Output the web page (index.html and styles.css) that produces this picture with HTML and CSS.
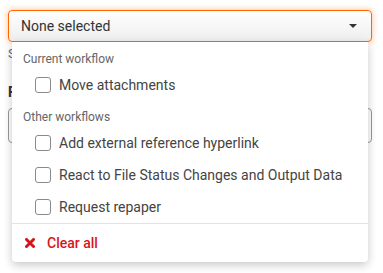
FILE: index.html
```html
<!DOCTYPE html>
<html lang="en">
<head>
    <meta charset="UTF-8">
    <meta name="viewport" content="width=device-width, initial-scale=1.0">
    <title>Workflow picker</title>
    <link rel="stylesheet" href="styles.css">
</head>
<body>
<div class="form">
    <div class="field-label top-label">Workflow (optional)</div>

    <div class="picker">
        <div class="select">
            <span class="select-value">None selected</span>
            <span class="caret"></span>
        </div>

        <div class="menu">
            <div class="menu-group">Current workflow</div>
            <label class="option"><span class="box"></span>Move attachments</label>

            <div class="menu-group">Other workflows</div>
            <label class="option"><span class="box"></span>Add external reference hyperlink</label>
            <label class="option"><span class="box"></span>React to File Status Changes and Output Data</label>
            <label class="option"><span class="box"></span>Request repaper</label>

            <div class="menu-footer">
                <span class="clear">
                    <svg class="clear-icon" width="10" height="10" viewBox="0 0 10 10">
                        <path d="M1.5 1.5 L8.5 8.5 M8.5 1.5 L1.5 8.5" stroke="#d7141a" stroke-width="2.9" stroke-linecap="square"/>
                    </svg>
                    Clear all
                </span>
            </div>
        </div>
    </div>

    <div class="help">Select workflows to run</div>

    <div class="field-label bold">File name</div>
    <div class="input"></div>
</div>
</body>
</html>
```

FILE: styles.css
```css
body {
    font-family: Roboto, "Liberation Sans", sans-serif;
    margin: 0;
    background: #fff;
    color: #333;
    min-height: 100vh;
}

.form {
    padding: 0 11px 0 8px;
}

.field-label {
    font-size: 14px;
    line-height: 18px;
}

.top-label {
    margin-top: -19px;
}

.bold {
    font-weight: 700;
    margin-top: 20px;
    line-height: 20px;
}

.picker {
    position: relative;
    margin-top: 11px;
}

.select {
    height: 32px;
    box-sizing: border-box;
    border: 1px solid #ff6600;
    border-radius: 4px;
    box-shadow: 0 0 6px rgba(255, 102, 0, 0.45);
    background: linear-gradient(#ffffff, #eeeeee);
    display: flex;
    align-items: center;
    justify-content: space-between;
    padding: 0 14px 0 12px;
}

.select-value {
    font-size: 14px;
}

.caret {
    width: 0;
    height: 0;
    border-left: 4px solid transparent;
    border-right: 4px solid transparent;
    border-top: 4px solid #333;
}

.menu {
    position: absolute;
    top: 100%;
    left: 4px;
    right: 4px;
    background: #fff;
    border-radius: 0 0 4px 4px;
    box-shadow: 0 3px 10px rgba(0, 0, 0, 0.22);
    padding-top: 7px;
    z-index: 2;
}

.menu-group {
    font-size: 12px;
    line-height: 20px;
    color: #666;
    padding-left: 11px;
}

.option + .menu-group {
    margin-top: 6px;
}

.option {
    display: flex;
    align-items: center;
    height: 32px;
    padding-left: 23px;
    font-size: 14px;
    color: #444;
}

.box {
    width: 16px;
    height: 16px;
    box-sizing: border-box;
    border: 1px solid #8a8a8a;
    border-radius: 3px;
    margin-right: 8px;
}

.menu-footer {
    border-top: 1px solid #e3e3e3;
    height: 38px;
    display: flex;
    align-items: center;
    padding-left: 13px;
}

.clear {
    display: flex;
    align-items: center;
    gap: 12px;
    color: #d7141a;
    font-size: 14px;
    font-weight: 500;
}

.help {
    font-size: 13px;
    line-height: 16px;
    color: #666;
    margin-top: 4px;
}

.input {
    height: 35px;
    box-sizing: border-box;
    border: 1px solid #999;
    border-radius: 4px;
    margin-top: 6px;
}
```
